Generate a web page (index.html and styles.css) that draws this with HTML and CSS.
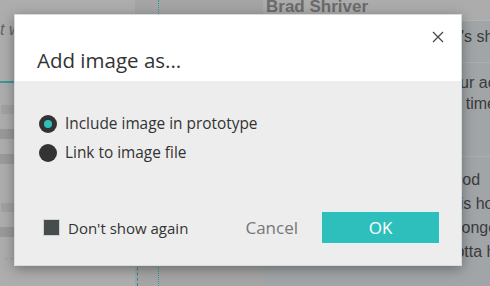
FILE: index.html
```html
<!DOCTYPE html>
<html lang="en">
<head>
  <meta charset="UTF-8" />
  <meta name="viewport" content="width=device-width, initial-scale=1.0" />
  <title>Add image as...</title>
  <link rel="stylesheet" href="styles.css">
</head>
<body>
  <div class="scene">
    <div class="col-left">
      <div class="note">t wait</div>
      <div class="rule"></div>
      <div class="bar bar-a"></div>
      <div class="bar bar-b"></div>
      <div class="bar bar-c"></div>
      <div class="bar bar-d"></div>
      <div class="bar bar-e"></div>
      <div class="dots">· ·</div>
    </div>
    <div class="col-mid">
      <div class="guide guide-dash"></div>
      <div class="guide guide-dot"></div>
    </div>
    <div class="col-right">
      <div class="name">Brad Shriver</div>
      <div class="msg msg-1"><p>It's shared</p></div>
      <div class="msg msg-2"><p>Your account</p><p>the time</p></div>
      <div class="msg msg-3"><p>Good</p><p>This how</p><p>longer</p><p>Gotta h</p></div>
    </div>
  </div>

  <div class="dialog">
    <div class="dlg-head">
      <h2 class="dlg-title">Add image as...</h2>
      <svg class="dlg-close" width="12" height="12" viewBox="0 0 12 12">
        <path d="M1 1 L11 11 M11 1 L1 11" stroke="#444" stroke-width="1.2" fill="none"/>
      </svg>
    </div>
    <div class="dlg-body">
      <div class="options">
        <label class="option"><span class="radio checked"></span>Include image in prototype</label>
        <label class="option"><span class="radio"></span>Link to image file</label>
      </div>
      <div class="dlg-foot">
        <label class="check"><span class="box"></span>Don't show again</label>
        <span class="btn-cancel">Cancel</span>
        <span class="btn-ok">OK</span>
      </div>
    </div>
  </div>
</body>
</html>
```

FILE: styles.css
```css
* { box-sizing: border-box; margin: 0; padding: 0; }
html, body { width: 100%; height: 100%; overflow: hidden; }
body { font-family: "Open Sans", sans-serif; background: #acacac; position: relative; }

/* dimmed page behind the dialog */
.scene { display: flex; height: 286px; }
.col-left { width: 135px; flex-shrink: 0; background: #adadad; display: flex; flex-direction: column; }
.note { height: 81px; padding-top: 21px; font-family: "Liberation Sans", sans-serif; font-style: italic; font-size: 16px; color: #636363; white-space: nowrap; }
.rule { height: 2px; background: #3a9b98; }
.bar { height: 9px; background: #9c9c9c; }
.bar-a { margin-top: 22px; margin-left: 1px; background: #a2a2a2; }
.bar-b { margin-top: 15px; height: 10px; background: #999; }
.bar-c { margin-top: 15px; height: 10px; background: #9b9b9b; }
.bar-d { margin-top: 39px; margin-left: 1px; background: #a1a1a1; }
.bar-e { margin-top: 15px; height: 10px; background: #9a9a9a; }
.dots { margin-top: 16px; padding-left: 5px; font-size: 10px; line-height: 10px; color: #8c8c8c; }

.col-mid { width: 128px; flex-shrink: 0; background: #a5a5a5; display: flex; }
.guide { width: 1px; }
.guide-dash { margin-left: 2px; align-self: flex-end; height: 60px; border-left: 1px dashed #2a8f8c; }
.guide-dot { margin-left: 20px; border-left: 1px dotted #2f9a97; }

.col-right { flex: 1; min-width: 0; overflow: hidden; background: #a1a5a7; display: flex; flex-direction: column; font-family: "Liberation Sans", sans-serif; color: #3b3c3d; font-size: 16px; }
.name { height: 21px; background: #acacac; font-weight: bold; font-size: 17px; line-height: 14px; color: #6b6b6b; padding-left: 3px; border-bottom: 1px solid #b2b5b6; }
.msg { border-bottom: 1px solid #acafb1; white-space: nowrap; }
.msg-1 { height: 42px; padding-top: 7px; }
.msg-2 { height: 94px; padding-top: 9px; line-height: 21px; }
.msg-3 { flex: 1; padding-top: 11px; line-height: 24px; border-bottom: 0; }
.msg-1 p { margin-left: 189px; }
.msg-2 p:first-child { margin-left: 179px; }
.msg-2 p:last-child { margin-left: 176px; }
.msg-3 p:nth-child(1) { margin-left: 178px; }
.msg-3 p:nth-child(2) { margin-left: 178px; }
.msg-3 p:nth-child(3) { margin-left: 195px; }
.msg-3 p:nth-child(4) { margin-left: 180px; }

/* dialog */
.dialog { position: absolute; left: 14px; top: 14px; width: 448px; height: 252px; background: #ededed; border: 1px solid #d6dcdc; box-shadow: 0 3px 12px rgba(0, 0, 0, 0.35); display: flex; flex-direction: column; }
.dlg-head { height: 66px; background: #fff; display: flex; justify-content: space-between; align-items: flex-start; padding: 0 17px 0 22px; }
.dlg-title { font-weight: normal; font-size: 20.5px; color: #333; margin-top: 31px; }
.dlg-close { margin-top: 16px; }
.dlg-body { flex: 1; padding: 34px 0 0 24px; display: flex; flex-direction: column; }
.options { display: flex; flex-direction: column; gap: 11px; }
.option { display: flex; align-items: center; gap: 8px; font-size: 15.4px; color: #333; line-height: 18px; }
.radio { width: 18px; height: 18px; border-radius: 50%; background: #333; display: flex; align-items: center; justify-content: center; }
.radio.checked::after { content: ""; width: 8px; height: 8px; border-radius: 50%; background: #2ec0bd; }
.dlg-foot { display: flex; align-items: center; margin-top: 49px; padding-right: 21px; }
.check { display: flex; align-items: center; gap: 8px; font-size: 15px; color: #333; margin-left: 4px; }
.box { width: 17px; height: 17px; background: #474c4d; border: 1px solid #cfd3d3; }
.btn-cancel { margin-left: auto; font-size: 17px; color: #777; }
.btn-ok { margin-left: 23px; width: 119px; height: 33px; background: #2ebfbd; color: #fff; font-size: 17px; display: flex; align-items: center; justify-content: center; border: 1px solid #dff3f2; }
```
